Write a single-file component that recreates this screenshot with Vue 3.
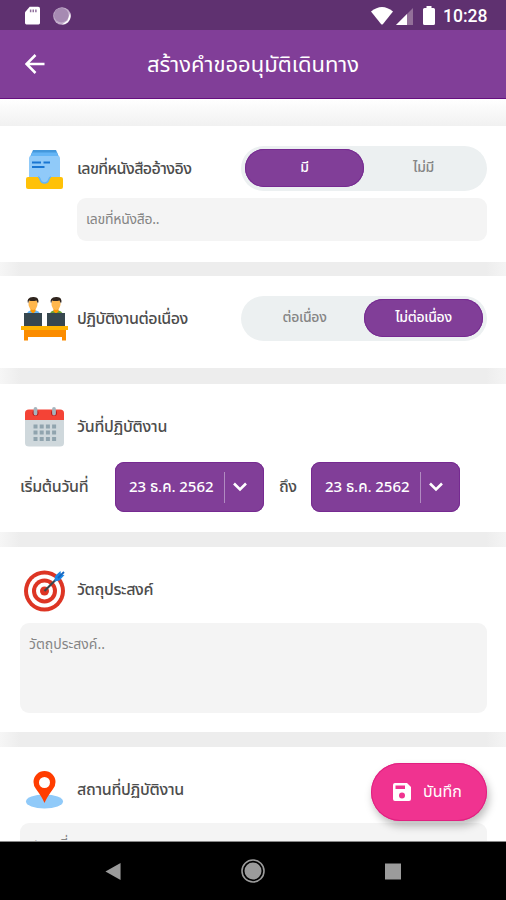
<script setup>
import { ref } from 'vue'

const hasReference = ref(true)
const continuous = ref(false)
const startDate = ref('23 ธ.ค. 2562')
const endDate = ref('23 ธ.ค. 2562')
</script>

<template>
  <div class="screen">
    <div class="status">
      <svg class="sd" viewBox="0 0 16 20"><path d="M5 0H14Q16 0 16 2V17.500Q16 19 14.500 19H1.500Q0 19 0 17.500V6Z" fill="#fff" /><path d="M6 3v3M8.800 3v3M11.600 3v3" stroke="#8f6f9b" stroke-width="1.600" /></svg>
      <svg class="sync" viewBox="0 0 18 18"><circle cx="9" cy="9" r="8.800" fill="#c3aecb" /><path d="M17 6A8.500 8.500 0 0 1 9 17.500L14.500 13.500Z" fill="#fff" /><circle cx="8.300" cy="8.200" r="7.300" fill="#a68ab2" /></svg>
      <span class="grow"></span>
      <svg class="wifi" viewBox="0 0 22 18"><path d="M0 4.500Q11-4.500 22 4.500L12 17Q11 18 10 17Z" fill="#fff" /></svg>
      <svg class="signal" viewBox="0 0 17 17"><path d="M0 17L17 0V17Z" fill="#937099" /><path d="M0 17L11 6V17Z" fill="#fff" /></svg>
      <svg class="battery" viewBox="0 0 12 19"><path d="M3.500 0h5v2H10.500Q12 2 12 3.500V17.500Q12 19 10.500 19H1.500Q0 19 0 17.500V3.500Q0 2 1.500 2H3.500Z" fill="#fff" /></svg>
      <span class="clock">10:28</span>
    </div>
    <header class="header">
      <svg class="back" viewBox="0 0 20 20"><path d="M19.500 10H2M10.500 1L1.500 10L10.500 19" fill="none" stroke="#fff" stroke-width="2.500" /></svg>
      <h1 class="title">สร้างคำขออนุมัติเดินทาง</h1>
    </header>

    <main class="content">
      <section class="card reference">
        <div class="row">
          <svg class="icon" viewBox="0 0 48 48">
            <path d="M12 5H35L38 12H9Z" fill="#4498dc" /><path d="M11 7.500H36L39 16H8Z" fill="#64b5f6" />
            <path d="M8 13Q8 11 10 11H37Q39 11 39 13V35H8Z" fill="#90caf9" />
            <path d="M11 17.500H20M22.500 17.500H29M11 22H23.500" stroke="#1976d2" stroke-width="2" />
            <path d="M5 34Q5 32 7 32H40Q42 32 42 34V42Q42 44 40 44H7Q5 44 5 42Z" fill="#ffc107" />
            <path d="M17 31.500Q18.500 32 19 34Q20 38 23.500 38T28 34Q28.500 32 30 31.500Z" fill="#90caf9" />
            <path d="M17 32Q18.500 32 19 34Q20 38 23.500 38T28 34Q28.500 32 30 32" fill="none" stroke="#64b5f6" stroke-width="1.500" />
          </svg>
          <span class="label l-ref">เลขที่หนังสืออ้างอิง</span>
          <div class="toggle">
            <button :class="{ on: hasReference }" @click="hasReference = true">มี</button>
            <button :class="{ on: !hasReference }" @click="hasReference = false">ไม่มี</button>
          </div>
        </div>
        <div class="field ref-field"><span class="ph p-ref">เลขที่หนังสือ..</span></div>
      </section>

      <section class="card work">
        <div class="row">
          <svg class="icon" viewBox="0 0 48 48">
            <path d="M5 21Q6 15 12 15Q19 15 20 21Z" fill="#64b5f6" /><path d="M28 21Q29 15 35 15Q41 15 43 21Z" fill="#689f38" />
            <path d="M9.500 12h5v4.500l-2.500 2-2.500-2ZM32.500 12h5v4.500l-2.500 2-2.500-2Z" fill="#ff9800" />
            <g fill="#ffb74d"><ellipse cx="12" cy="9" rx="4.500" ry="6" /><ellipse cx="35" cy="9" rx="4.500" ry="6" /></g>
            <path d="M7 8.500Q5 2.500 12 2Q19 1.500 17 8.500L15.500 5.500Q11 6.500 8 5.500ZM30 8.500Q28 2.500 35 2Q42 1.500 40 8.500L38.500 5.500Q34 6.500 31 5.500Z" fill="#30251e" />
            <rect x="3" y="18" width="18" height="13" fill="#37474f" /><rect x="26" y="18" width="18" height="13" fill="#37474f" />
            <path d="M3 35H45V45.500H41V42H7V45.500H3Z" fill="#fb8c00" /><path d="M0 31H47V35H0Z" fill="#ffb300" />
          </svg>
          <span class="label l-work">ปฏิบัติงานต่อเนื่อง</span>
          <div class="toggle">
            <button :class="{ on: continuous }" @click="continuous = true">ต่อเนื่อง</button>
            <button :class="{ on: !continuous }" @click="continuous = false">ไม่ต่อเนื่อง</button>
          </div>
        </div>
      </section>

      <section class="card dates">
        <div class="row">
          <svg class="icon" viewBox="0 0 48 48">
            <path d="M4 16H43V40Q43 43.500 39 43.500H8Q4 43.500 4 40Z" fill="#cfd8dc" /><path d="M4 17V10Q4 6.500 8 6.500H39Q43 6.500 43 10V17Z" fill="#f44336" />
            <circle cx="14.500" cy="10" r="3" fill="#b71c1c" /><circle cx="33" cy="10" r="3" fill="#b71c1c" />
            <path d="M14.500 6V10.500M33 6V10.500" stroke="#a5b4bd" stroke-width="3.800" stroke-linecap="round" />
            <path d="M12.500 23.500H35.500M12.500 29.500H35.500M12.500 36H35.500" stroke="#90a4ae" stroke-width="4" stroke-dasharray="4 2.200" />
          </svg>
          <span class="label l-date">วันที่ปฏิบัติงาน</span>
        </div>
        <div class="date-row">
          <span class="label l-from">เริ่มต้นวันที่</span>
          <button class="date"><span>{{ startDate }}</span><i></i><svg viewBox="0 0 14 10"><path d="M1 1.500L7 7.500L13 1.500" fill="none" stroke="#fff" stroke-width="2.600" /></svg></button>
          <span class="label l-to">ถึง</span>
          <button class="date"><span>{{ endDate }}</span><i></i><svg viewBox="0 0 14 10"><path d="M1 1.500L7 7.500L13 1.500" fill="none" stroke="#fff" stroke-width="2.600" /></svg></button>
        </div>
      </section>

      <section class="card purpose">
        <div class="row">
          <svg class="icon" viewBox="0 0 48 48">
            <circle cx="23.500" cy="25" r="20.500" fill="#dd3524" /><circle cx="23.500" cy="25" r="16.500" fill="#fff" /><circle cx="23.500" cy="25" r="12.500" fill="#dd3524" /><circle cx="23.500" cy="25" r="8.500" fill="#fff" /><circle cx="23.500" cy="25" r="4.500" fill="#dd3524" />
            <path d="M23.500 25L38 10.500" stroke="#37474f" stroke-width="2.200" /><path d="M34 10L39.500 5L40 8.500L43.500 9L38.500 14.500L33.500 15.500Z" fill="#1e88e5" /><path d="M37 12L43 6" stroke="#1565c0" stroke-width="1.800" />
          </svg>
          <span class="label l-purpose">วัตถุประสงค์</span>
        </div>
        <div class="field area"><span class="ph p-purpose">วัตถุประสงค์..</span></div>
      </section>

      <section class="card place">
        <div class="row">
          <svg class="icon" viewBox="0 0 48 48">
            <ellipse cx="23.500" cy="35.500" rx="18.500" ry="7" fill="#90caf9" /><path d="M23.500 37Q21 31 15 23Q12.500 20 12.500 16A11 11 0 0 1 34.500 16Q34.500 20 32 23Q26 31 23.500 37Z" fill="#ff3d00" /><circle cx="23.500" cy="16.500" r="5.500" fill="#fff" />
          </svg>
          <span class="label l-place">สถานที่ปฏิบัติงาน</span>
        </div>
        <div class="field area"><span class="ph p-place">สถานที่..</span></div>
      </section>

      <button class="save">
        <svg viewBox="0 0 18 18"><path fill-rule="evenodd" d="M2 0H14L18 4V16Q18 18 16 18H2Q0 18 0 16V2Q0 0 2 0ZM2.500 2.500V6H12V2.500ZM9 9.500A3 3 0 1 0 9 15.500A3 3 0 0 0 9 9.500Z" fill="#fff" /></svg>
        <span>บันทึก</span>
      </button>
    </main>

    <nav class="nav">
      <svg viewBox="0 0 16 18"><path d="M16 0V18L0 9Z" fill="#9b9b9b" /></svg>
      <svg class="home" viewBox="0 0 24 24"><circle cx="12" cy="12" r="11" fill="none" stroke="#9b9b9b" stroke-width="1.600" /><circle cx="12" cy="12" r="8.500" fill="#9b9b9b" /></svg>
      <svg viewBox="0 0 16 16"><path d="M0 0H16V16H0Z" fill="#9b9b9b" /></svg>
    </nav>
  </div>
</template>

<style>
body { margin: 0; overflow: hidden; }
</style>

<style scoped>
* { box-sizing: border-box; }
.screen { width: 506px; height: 900px; display: flex; flex-direction: column; overflow: hidden; background: #fff; font-family: "Noto Sans Thai", "Noto Sans", Roboto, sans-serif; color: #4d4d4d; }
button { border: 0; padding: 0; margin: 0; font: inherit; background: none; white-space: nowrap; }
svg { display: block; flex: none; }
.status { height: 30px; flex: none; background: #5f3170; display: flex; align-items: center; padding: 1px 19px 0 25px; }
.sd { width: 15px; height: 20px; }
.sync { width: 18px; height: 18px; margin-left: 13px; }
.grow { flex: 1; }
.wifi { width: 22px; height: 18px; }
.signal { width: 17px; height: 17px; margin: 1px 10px 0 3px; }
.battery { width: 12px; height: 19px; margin-right: 8px; }
.clock { width: 44px; font: 500 17.500px/30px Roboto, sans-serif; color: #fff; white-space: nowrap; }
.header { height: 69px; flex: none; background: #813e98; border-bottom: 1px solid #660f7f; display: flex; align-items: center; padding-left: 25px; }
.back { width: 20px; height: 20px; }
.title { flex: 1; margin: 4px 45px 0 0; text-align: center; font-size: 22px; font-weight: 400; color: #fff; line-height: 40px; }
.content { flex: 1; min-height: 0; overflow: hidden; position: relative; padding-top: 27px; display: flex; flex-direction: column; background: linear-gradient(#fff 0, #f1f1f1 27px, transparent 27px), linear-gradient(90deg, #f6f6f6, #ededed 20px, #ededed 486px, #f4f4f4); border-bottom: 1px solid #888; }
.card { flex: none; background: #fff; padding: 20px 19px 0 20px; }
.reference { height: 136px; margin-bottom: 14px; }
.work { height: 92px; margin-bottom: 16px; }
.dates { height: 148px; margin-bottom: 15px; }
.purpose { height: 185px; margin-bottom: 15px; }
.place { height: 130px; }
.row { height: 46px; display: flex; align-items: center; }
.icon { width: 48px; height: 48px; margin: 0 8px 0 1px; }
.label { font-size: 16px; font-weight: 500; white-space: nowrap; line-height: 30px; }
.l-ref { letter-spacing: -.58px; }
.l-work { letter-spacing: -.52px; }
.l-date { letter-spacing: -.28px; }
.l-purpose { letter-spacing: -.35px; }
.l-place { letter-spacing: -.3px; }
.toggle { width: 246px; height: 45px; margin: 0 0 2px auto; border-radius: 23px; padding: 3px 4px 4px; background: #ecf0f1; display: flex; }
.toggle button { flex: 1; border-radius: 20px; font-size: 14px; font-weight: 500; letter-spacing: -.3px; color: #858585; line-height: 36px; }
.toggle .on { background: #813e98; color: #fff; box-shadow: inset 0 0 0 1px #762a91; }
.field { background: #f4f4f4; border-radius: 9px; padding: 0 9px; }
.ref-field { height: 43px; margin: 6px 0 0 57px; line-height: 42px; }
.ph { font-size: 14px; color: #858585; white-space: nowrap; }
.p-ref { letter-spacing: -.25px; }
.area { height: 90px; margin-top: 10px; line-height: 42px; }
.date-row { display: flex; align-items: center; margin-top: 12px; height: 50px; }
.l-from { width: 95px; letter-spacing: -.3px; }
.l-to { width: 47px; padding-left: 15px; letter-spacing: -.5px; }
.date { width: 149px; height: 50px; border-radius: 9px; background: #813e98; box-shadow: inset 0 0 0 1px #762a91; color: #fff; display: flex; align-items: center; padding-left: 14px; font-size: 15px; font-weight: 500; letter-spacing: -.05px; }
.date span { width: 95px; text-align: left; }
.date i { width: 1px; height: 31px; background: #b18bc1; }
.date svg { width: 14px; height: 10px; margin-left: 8px; }
.save { position: absolute; left: 371px; top: 664px; width: 116px; height: 58px; border-radius: 29px; background: #f03390; box-shadow: inset 0 0 0 1px #e02080, 2px 5px 8px #0004; color: #fff; display: flex; align-items: center; padding-left: 22px; font-size: 16px; }
.save svg { width: 18px; height: 18px; margin-right: 12px; }
.nav { height: 58px; flex: none; background: #000; display: flex; align-items: center; padding: 0 105px; justify-content: space-between; }
.nav svg { width: 16px; height: 17px; }
.nav .home { width: 24px; height: 24px; }
</style>
